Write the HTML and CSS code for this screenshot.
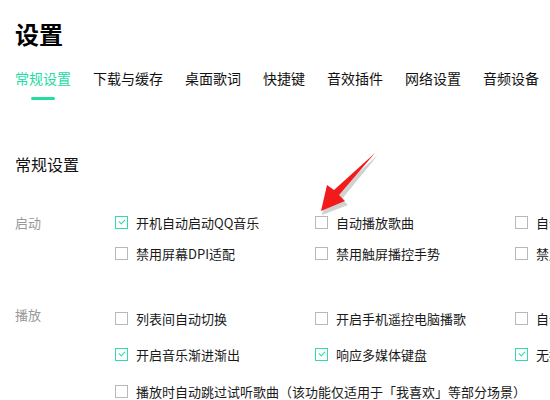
FILE: index.html
```html
<!DOCTYPE html>
<html lang="zh-CN">
<head>
    <meta charset="UTF-8">
    <title>设置</title>
    <link rel="stylesheet" href="styles.css">
</head>
<body>
    <div class="page">
        <h1 class="title">设置</h1>
        <nav class="tabs">
            <span class="tab active">常规设置</span>
            <span class="tab">下载与缓存</span>
            <span class="tab">桌面歌词</span>
            <span class="tab">快捷键</span>
            <span class="tab">音效插件</span>
            <span class="tab">网络设置</span>
            <span class="tab">音频设备</span>
        </nav>

        <h2 class="section">常规设置</h2>

        <!-- 启动 -->
        <div class="group startup">
            <div class="label">启动</div>
            <label class="opt"><span class="box checked"></span>开机自动启动QQ音乐</label>
            <label class="opt"><span class="box"></span>自动播放歌曲</label>
            <label class="opt"><span class="box"></span>自动打开歌词</label>
            <div class="label"></div>
            <label class="opt"><span class="box"></span>禁用屏幕DPI适配</label>
            <label class="opt"><span class="box"></span>禁用触屏播控手势</label>
            <label class="opt"><span class="box"></span>禁用硬件加速</label>
        </div>

        <!-- 播放 -->
        <div class="group play">
            <div class="label">播放</div>
            <label class="opt"><span class="box"></span>列表间自动切换</label>
            <label class="opt"><span class="box"></span>开启手机遥控电脑播歌</label>
            <label class="opt"><span class="box"></span>自动播放相似歌曲</label>
            <div class="label"></div>
            <label class="opt"><span class="box checked"></span>开启音乐渐进渐出</label>
            <label class="opt"><span class="box checked"></span>响应多媒体键盘</label>
            <label class="opt"><span class="box checked"></span>无损音质优先</label>
            <div class="label"></div>
            <label class="opt wide"><span class="box"></span>播放时自动跳过试听歌曲（该功能仅适用于「我喜欢」等部分场景）</label>
        </div>
    </div>

    <!-- red annotation arrow -->
    <svg class="arrow" width="550" height="400" viewBox="0 0 550 400">
        <polygon points="376,152 340,196 346,202 320,212 326,184 333,190" fill="rgba(0,0,0,0.18)" transform="translate(2,3)"/>
        <polygon points="375,153 339,195 345,201 321,211 327,185 334,190" fill="#f21b1b"/>
    </svg>
</body>
</html>
```

FILE: styles.css
```css
body {
    margin: 0;
    padding: 0;
    background-color: #fff;
    color: #222;
    font-family: "Noto Sans CJK SC", "Noto Sans", sans-serif;
    width: 550px;
    height: 400px;
    overflow: hidden;
    position: relative;
}
.page {
    padding-left: 15px;
    width: 800px;
}
.title {
    margin: 0;
    padding-top: 20px;
    font-size: 24px;
    line-height: 28px;
    font-weight: 700;
    color: #000;
}
.tabs {
    display: flex;
    gap: 22px;
    margin-top: 20px;
    height: 32px;
}
.tab {
    display: flex;
    flex-direction: column;
    align-items: center;
    font-size: 14px;
    line-height: 20px;
    color: #111;
}
.tab.active {
    color: #22dca2;
}
.tab.active::after {
    content: "";
    display: block;
    width: 24px;
    height: 3px;
    border-radius: 2px;
    margin-top: 9px;
    background-color: #22dca2;
}
.section {
    margin: 53px 0 0;
    font-size: 16px;
    line-height: 22px;
    font-weight: 400;
    color: #111;
}
.group {
    display: grid;
    grid-template-columns: 100px 200px 200px 200px;
    margin-top: 32px;
}
.startup {
    grid-auto-rows: 31px;
}
.play {
    grid-auto-rows: 36.5px;
    margin-top: 31px;
}
.label {
    font-size: 13px;
    line-height: 31px;
    color: #999;
}
.play .label {
    line-height: 30px;
}
.opt {
    display: flex;
    align-items: center;
    font-size: 13px;
    white-space: nowrap;
    color: #1a1a1a;
}
.opt.wide {
    grid-column: 2 / 5;
}
.box {
    width: 13px;
    height: 13px;
    box-sizing: border-box;
    border: 1px solid #b8b8b8;
    margin-right: 8px;
    flex-shrink: 0;
    position: relative;
}
.box.checked {
    border-color: #2fdcaa;
}
.box.checked::after {
    content: "";
    position: absolute;
    left: 3px;
    top: 2px;
    width: 5px;
    height: 3px;
    border-left: 1.5px solid #2fdcaa;
    border-bottom: 1.5px solid #2fdcaa;
    transform: rotate(-45deg);
}
.arrow {
    position: absolute;
    top: 0;
    left: 0;
    pointer-events: none;
}
```
